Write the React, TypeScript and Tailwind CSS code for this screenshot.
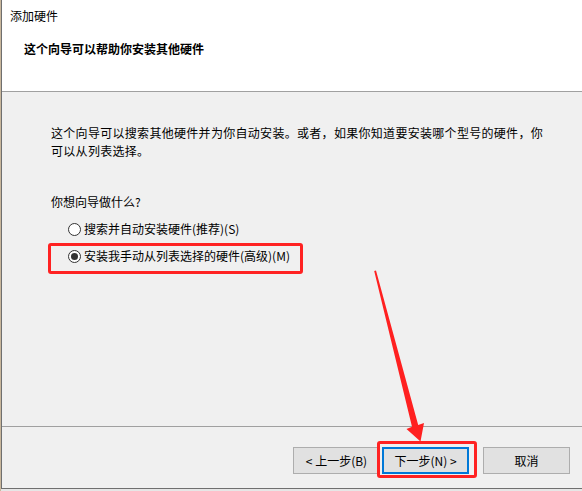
import React from "react";

const font = { fontFamily: '"Microsoft YaHei", "Noto Sans CJK SC", "Noto Sans", sans-serif' };

function Radio({ checked }: { checked?: boolean }) {
  return (
    <span className="flex h-[13px] w-[13px] shrink-0 items-center justify-center rounded-full border border-[#333333] bg-white">
      {checked && <span className="h-[7px] w-[7px] rounded-full bg-[#333333]" />}
    </span>
  );
}

function Button({ children, primary }: { children: React.ReactNode; primary?: boolean }) {
  return (
    <div
      className={
        "flex h-[27px] w-[87px] items-center justify-center bg-[#e1e1e1] text-[12px] text-black " +
        (primary ? "border-2 border-[#0078d7]" : "border border-[#adadad]")
      }
    >
      {children}
    </div>
  );
}

export default function App() {
  return (
    <div className="relative flex h-[491px] w-[582px] overflow-hidden bg-[#e6e6e6]" style={font}>
      {/* sliver of the window behind */}
      <div className="w-px shrink-0 bg-[#c9b79c]" />
      <div className="flex h-[489px] flex-1 flex-col border-b border-l border-[#6f6f6f] bg-[#f0f0f0]">
        {/* wizard header */}
        <div className="h-[92px] shrink-0 border-b border-[#a0a0a0] bg-white">
          <div className="pl-[8px] pt-[7px] text-[12px] leading-[18px] text-black">添加硬件</div>
          <div className="pl-[22px] pt-[15px] text-[12px] font-bold leading-[18px] text-black">
            这个向导可以帮助你安装其他硬件
          </div>
        </div>

        {/* wizard body */}
        <div className="flex-1 pl-[49px] pt-[32px] text-[12px] leading-[18px] text-black">
          <p className="w-[493px] tracking-[0.3px]">
            这个向导可以搜索其他硬件并为你自动安装。或者，如果你知道要安装哪个型号的硬件，你可以从列表选择。
          </p>
          <p className="mt-[33px]">你想向导做什么?</p>
          <div className="mt-[9px] flex flex-col gap-[9px] pl-[17px]">
            <label className="flex items-center gap-[3px]">
              <Radio />
              <span>搜索并自动安装硬件(推荐)(S)</span>
            </label>
            <label className="flex items-center gap-[3px]">
              <Radio checked />
              <span>安装我手动从列表选择的硬件(高级)(M)</span>
            </label>
          </div>
        </div>

        {/* wizard footer */}
        <div className="flex h-[62px] shrink-0 items-start justify-end border-t border-[#a0a0a0] pr-[12px] pt-[20px]">
          <div className="flex gap-[2px]">
            <Button>&lt; 上一步(B)</Button>
            <Button primary>下一步(N) &gt;</Button>
          </div>
          <div className="ml-[14px]">
            <Button>取消</Button>
          </div>
        </div>
      </div>

      {/* red highlight marks */}
      <div className="pointer-events-none absolute left-[48px] top-[243px] h-[31px] w-[255px] rounded-[3px] border-[3px] border-[#ff2222]" />
      <div className="pointer-events-none absolute left-[377px] top-[441px] h-[37px] w-[100px] rounded-[3px] border-[3px] border-[#ff2222]" />
      <svg className="pointer-events-none absolute left-0 top-0" width="582" height="491" viewBox="0 0 582 491">
        <polygon
          points="374.2,271 376,270.6 418.2,425 424,423 420.5,441.5 406.5,429 412,426.8"
          fill="#ff2020"
        />
      </svg>
    </div>
  );
}
